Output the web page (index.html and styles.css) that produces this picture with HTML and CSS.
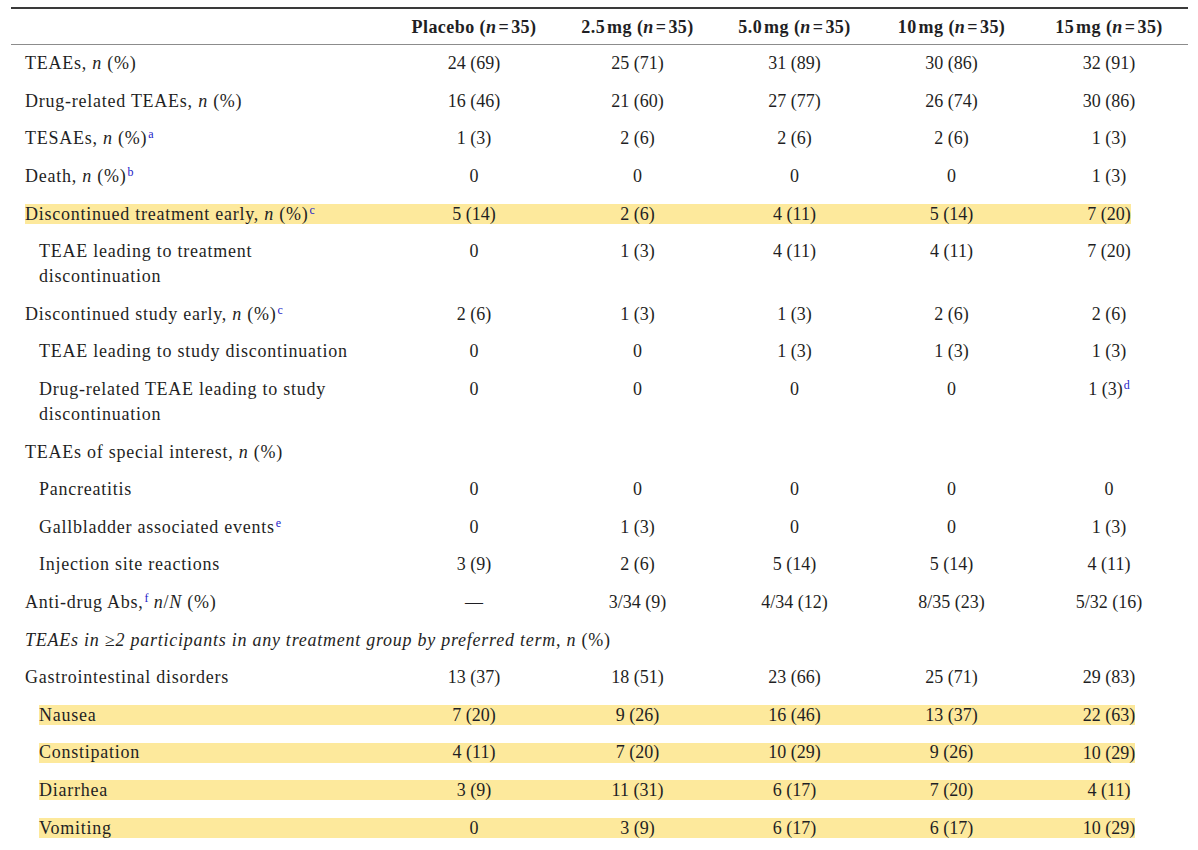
FILE: index.html
```html
<!DOCTYPE html>
<html lang="en">
<head>
<meta charset="utf-8">
<title>Safety summary</title>
<link rel="stylesheet" href="styles.css">
</head>
<body>
<table class="ae">
  <colgroup>
    <col class="c-label"><col class="c-pbo"><col class="c-dose"><col class="c-dose"><col class="c-dose"><col class="c-last">
  </colgroup>
  <thead>
    <tr>
      <th></th>
      <th>Placebo (<i>n</i>&#8202;=&#8202;35)</th>
      <th>2.5&#8202;mg (<i>n</i>&#8202;=&#8202;35)</th>
      <th>5.0&#8202;mg (<i>n</i>&#8202;=&#8202;35)</th>
      <th>10&#8202;mg (<i>n</i>&#8202;=&#8202;35)</th>
      <th>15&#8202;mg (<i>n</i>&#8202;=&#8202;35)</th>
    </tr>
  </thead>
  <tbody>
    <tr><td class="lbl">TEAEs, <i>n</i> (%)</td><td>24 (69)</td><td>25 (71)</td><td>31 (89)</td><td>30 (86)</td><td>32 (91)</td></tr>
    <tr><td class="lbl">Drug-related TEAEs, <i>n</i> (%)</td><td>16 (46)</td><td>21 (60)</td><td>27 (77)</td><td>26 (74)</td><td>30 (86)</td></tr>
    <tr><td class="lbl">TESAEs, <i>n</i> (%)<sup>a</sup></td><td>1 (3)</td><td>2 (6)</td><td>2 (6)</td><td>2 (6)</td><td>1 (3)</td></tr>
    <tr><td class="lbl">Death, <i>n</i> (%)<sup>b</sup></td><td>0</td><td>0</td><td>0</td><td>0</td><td>1 (3)</td></tr>
    <tr class="hl"><td class="lbl">Discontinued treatment early, <i>n</i> (%)<sup>c</sup></td><td>5 (14)</td><td>2 (6)</td><td>4 (11)</td><td>5 (14)</td><td><div class="tail"><span>7 (20)</span></div></td></tr>
    <tr><td class="lbl ind">TEAE leading to treatment discontinuation</td><td>0</td><td>1 (3)</td><td>4 (11)</td><td>4 (11)</td><td>7 (20)</td></tr>
    <tr><td class="lbl">Discontinued study early, <i>n</i> (%)<sup>c</sup></td><td>2 (6)</td><td>1 (3)</td><td>1 (3)</td><td>2 (6)</td><td>2 (6)</td></tr>
    <tr><td class="lbl ind">TEAE leading to study discontinuation</td><td>0</td><td>0</td><td>1 (3)</td><td>1 (3)</td><td>1 (3)</td></tr>
    <tr><td class="lbl ind">Drug-related TEAE leading to study discontinuation</td><td>0</td><td>0</td><td>0</td><td>0</td><td>1 (3)<sup>d</sup></td></tr>
    <tr><td class="lbl">TEAEs of special interest, <i>n</i> (%)</td><td></td><td></td><td></td><td></td><td></td></tr>
    <tr><td class="lbl ind">Pancreatitis</td><td>0</td><td>0</td><td>0</td><td>0</td><td>0</td></tr>
    <tr><td class="lbl ind">Gallbladder associated events<sup>e</sup></td><td>0</td><td>1 (3)</td><td>0</td><td>0</td><td>1 (3)</td></tr>
    <tr><td class="lbl ind">Injection site reactions</td><td>3 (9)</td><td>2 (6)</td><td>5 (14)</td><td>5 (14)</td><td>4 (11)</td></tr>
    <tr><td class="lbl">Anti-drug Abs,<sup>f</sup> <i>n</i>/<i>N</i> (%)</td><td>—</td><td>3/34 (9)</td><td>4/34 (12)</td><td>8/35 (23)</td><td>5/32 (16)</td></tr>
    <tr><td class="lbl" colspan="6"><i>TEAEs in ≥2 participants in any treatment group by preferred term</i>, <i>n</i> (%)</td></tr>
    <tr><td class="lbl">Gastrointestinal disorders</td><td>13 (37)</td><td>18 (51)</td><td>23 (66)</td><td>25 (71)</td><td>29 (83)</td></tr>
    <tr class="hl"><td class="lbl ind">Nausea</td><td>7 (20)</td><td>9 (26)</td><td>16 (46)</td><td>13 (37)</td><td><div class="tail"><span>22 (63)</span></div></td></tr>
    <tr class="hl"><td class="lbl ind">Constipation</td><td>4 (11)</td><td>7 (20)</td><td>10 (29)</td><td>9 (26)</td><td><div class="tail"><span>10 (29)</span></div></td></tr>
    <tr class="hl"><td class="lbl ind">Diarrhea</td><td>3 (9)</td><td>11 (31)</td><td>6 (17)</td><td>7 (20)</td><td><div class="tail"><span>4 (11)</span></div></td></tr>
    <tr class="hl"><td class="lbl ind">Vomiting</td><td>0</td><td>3 (9)</td><td>6 (17)</td><td>6 (17)</td><td><div class="tail"><span>10 (29)</span></div></td></tr>
  </tbody>
</table>
</body>
</html>
```

FILE: styles.css
```css
* { box-sizing: border-box; }

body {
  margin: 0;
  padding: 7px 10px 0 11px;
  background: #ffffff;
  color: #1f1f24;
  font-family: "Liberation Serif", "Times New Roman", serif;
  font-size: 18px;
}

.ae {
  width: 1177px;
  border-collapse: collapse;
  table-layout: fixed;
}

.c-label { width: 378px; }
.c-pbo { width: 170px; }
.c-dose { width: 157px; }
.c-last { width: 158px; }

.ae thead th {
  border-top: 2px solid #3a3a3a;
  border-bottom: 1px solid #8c8c8c;
  padding: 6px 0 4px;
  line-height: 25px;
  font-weight: bold;
  letter-spacing: 0.45px;
  text-align: center;
  white-space: nowrap;
}

.ae tbody td {
  padding: 6.3px 0;
  line-height: 25px;
  text-align: center;
  vertical-align: top;
}

.ae td.lbl {
  text-align: left;
  letter-spacing: 0.75px;
  padding-left: 14px;
  padding-right: 30px;
}

.ae td.ind {
  padding-left: 28px;
}

.ae tr.hl td {
  background-image: linear-gradient(#fde99c, #fde99c);
  background-repeat: no-repeat;
  background-size: 100% 20px;
  background-position: 0 center;
}

.ae tr.hl td.lbl {
  background-size: calc(100% - 14px) 20px;
  background-position: 14px center;
}

.ae tr.hl td.ind {
  background-size: calc(100% - 28px) 20px;
  background-position: 28px center;
}

.ae tr.hl td:last-child {
  background-image: none;
}

.tail {
  display: flex;
  align-items: center;
  height: 20px;
  margin: 2.5px 0;
}

.tail::before {
  content: "";
  flex: 1;
  height: 20px;
  background: #fde99c;
}

.tail::after {
  content: "";
  flex: 1;
}

.tail span {
  line-height: 20px;
  background: #fde99c;
}

sup {
  font-size: 12px;
  line-height: 0;
  vertical-align: 6px;
  color: #2323c8;
  margin-left: 1px;
  letter-spacing: 0;
}
```
